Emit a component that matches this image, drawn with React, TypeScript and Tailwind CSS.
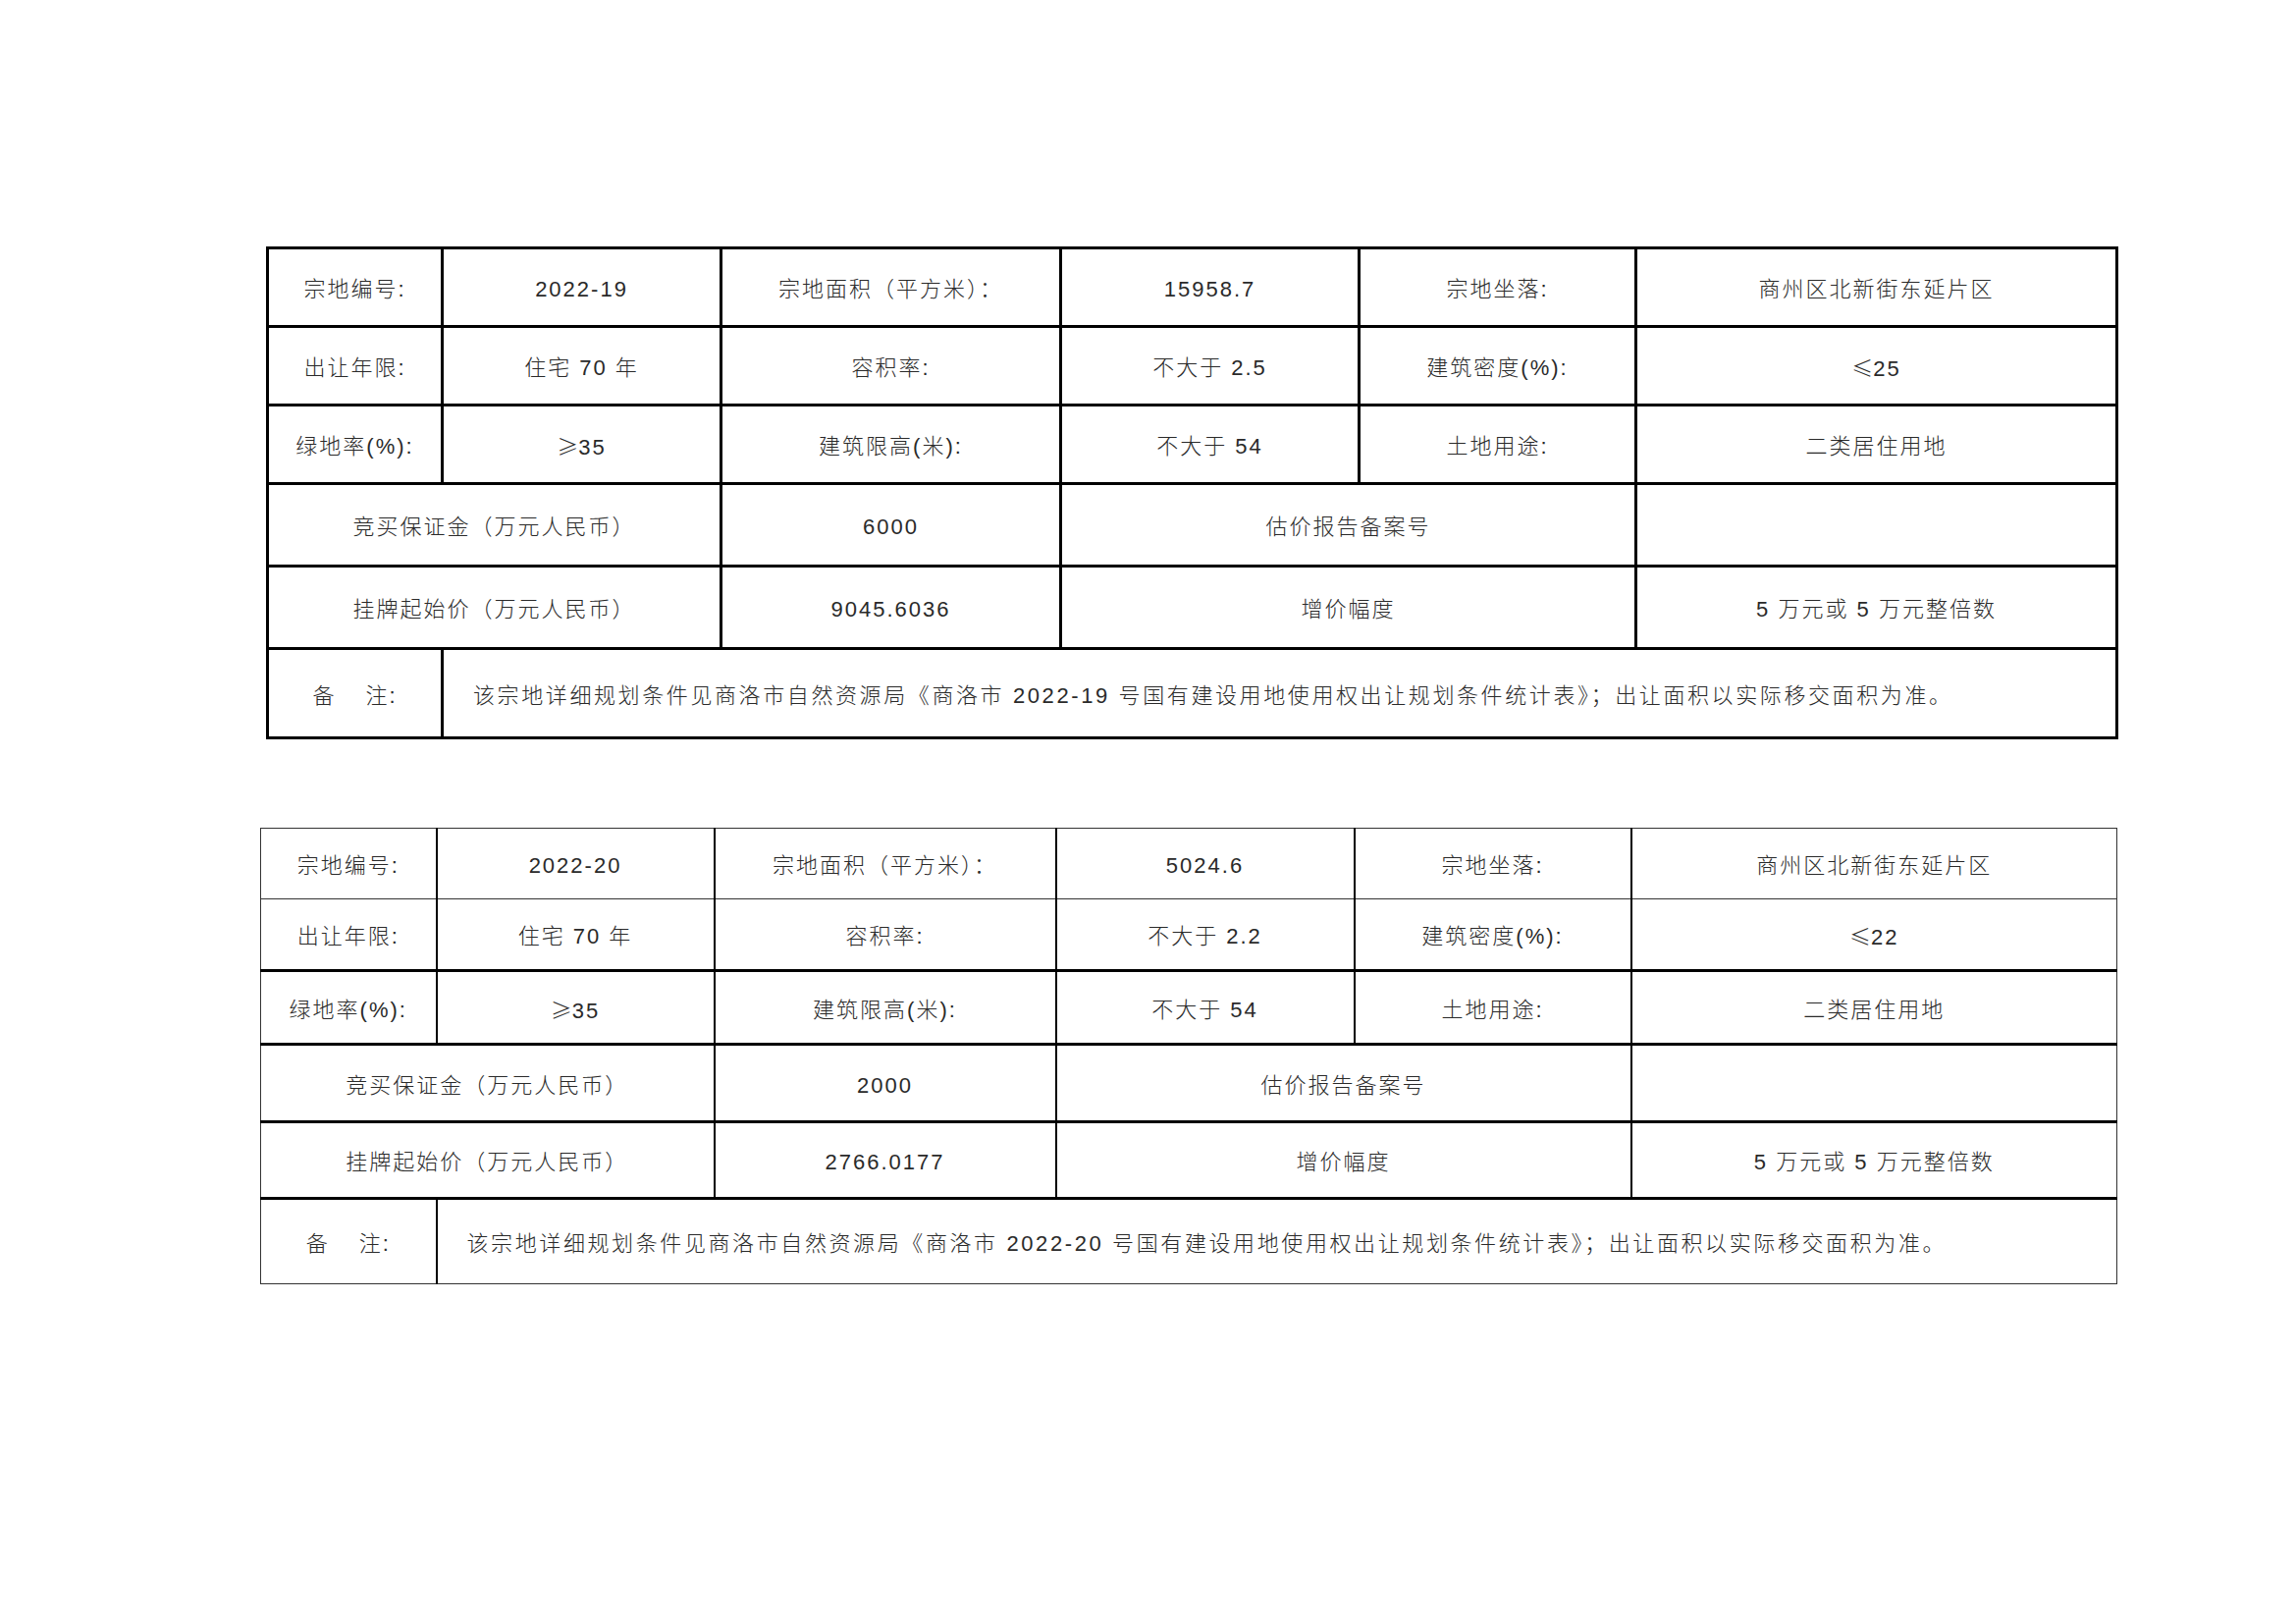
import React from "react";

type Parcel = {
  code: string;
  area: string;
  far: string;
  density: string;
  green: string;
  limit: string;
  deposit: string;
  price: string;
};

const parcels: Parcel[] = [
  {
    code: "2022-19",
    area: "15958.7",
    far: "不大于 2.5",
    density: "25",
    green: "35",
    limit: "不大于 54",
    deposit: "6000",
    price: "9045.6036",
  },
  {
    code: "2022-20",
    area: "5024.6",
    far: "不大于 2.2",
    density: "22",
    green: "35",
    limit: "不大于 54",
    deposit: "2000",
    price: "2766.0177",
  },
];

// the ≤ / ≥ signs are the wide CJK ones in the original
const Sign = ({ s }: { s: string }) => <span className="font-['Noto_Sans_CJK_SC',sans-serif] tracking-normal">{s}</span>;

function ParcelTable({ p, bold }: { p: Parcel; bold: boolean }) {
  // table 1 has heavy lines everywhere, table 2 mixes thin and heavy ones
  const cell = (row: number, first: boolean) => {
    let c = "text-center align-middle px-1 pt-[4px] ";
    if (bold) {
      c += "border-[3px] border-black";
    } else {
      c += "border border-[#333]";
      if (!first) c += " border-l-2 border-l-black";
      if (row >= 2) c += " border-t-[3px] border-t-black";
    }
    return c;
  };

  const widths = bold ? ["w-[178px]", "w-[284px]", "w-[346px]", "w-[304px]", "w-[282px]", "w-[490px]"] : ["w-[179px]", "w-[283px]", "w-[348px]", "w-[304px]", "w-[282px]", "w-[495px]"];
  const heights = bold
    ? ["h-[80px]", "h-[80px]", "h-[80px]", "h-[84px]", "h-[84px]", "h-[91px]"]
    : ["h-[72px]", "h-[73px]", "h-[75px]", "h-[79px]", "h-[78px]", "h-[87px]"];

  return (
    <table
      className={
        "table-fixed border-collapse text-[22px] tracking-[2px] text-[#2a2a2a] font-light font-['Liberation_Sans','Noto_Sans_CJK_SC',sans-serif] " +
        (bold ? "w-[1884px] ml-[271px]" : "w-[1891px] ml-[265px] mt-[90px]")
      }
    >
      <colgroup>
        {widths.map((w, i) => (
          <col key={i} className={w} />
        ))}
      </colgroup>
      <tbody>
        <tr className={heights[0]}>
          <td className={cell(0, true)}>宗地编号:</td>
          <td className={cell(0, false)}>{p.code}</td>
          <td className={cell(0, false)}>宗地面积（平方米）：</td>
          <td className={cell(0, false)}>{p.area}</td>
          <td className={cell(0, false)}>宗地坐落:</td>
          <td className={cell(0, false)}>商州区北新街东延片区</td>
        </tr>
        <tr className={heights[1]}>
          <td className={cell(1, true)}>出让年限:</td>
          <td className={cell(1, false)}>住宅 70 年</td>
          <td className={cell(1, false)}>容积率:</td>
          <td className={cell(1, false)}>{p.far}</td>
          <td className={cell(1, false)}>建筑密度(%):</td>
          <td className={cell(1, false)}>
            <Sign s="≤" />
            {p.density}
          </td>
        </tr>
        <tr className={heights[2]}>
          <td className={cell(2, true)}>绿地率(%):</td>
          <td className={cell(2, false)}>
            <Sign s="≥" />
            {p.green}
          </td>
          <td className={cell(2, false)}>建筑限高(米):</td>
          <td className={cell(2, false)}>{p.limit}</td>
          <td className={cell(2, false)}>土地用途:</td>
          <td className={cell(2, false)}>二类居住用地</td>
        </tr>
        <tr className={heights[3]}>
          <td colSpan={2} className={cell(3, true)}>竞买保证金（万元人民币）</td>
          <td className={cell(3, false)}>{p.deposit}</td>
          <td colSpan={2} className={cell(3, false)}>估价报告备案号</td>
          <td className={cell(3, false)}></td>
        </tr>
        <tr className={heights[4]}>
          <td colSpan={2} className={cell(4, true)}>挂牌起始价（万元人民币）</td>
          <td className={cell(4, false)}>{p.price}</td>
          <td colSpan={2} className={cell(4, false)}>增价幅度</td>
          <td className={cell(4, false)}>5 万元或 5 万元整倍数</td>
        </tr>
        <tr className={heights[5]}>
          <td className={cell(5, true)}>
            备<span className="inline-block w-[30px]"></span>注:
          </td>
          <td colSpan={5} className={cell(5, false) + " !text-left !pl-[30px] tracking-[2.6px] whitespace-nowrap"}>
            该宗地详细规划条件见商洛市自然资源局《商洛市 {p.code} 号国有建设用地使用权出让规划条件统计表》；出让面积以实际移交面积为准。
          </td>
        </tr>
      </tbody>
    </table>
  );
}

export default function App() {
  return (
    <div className="w-[2339px] h-[1654px] bg-white pt-[251px]">
      <ParcelTable p={parcels[0]} bold={true} />
      <ParcelTable p={parcels[1]} bold={false} />
    </div>
  );
}
